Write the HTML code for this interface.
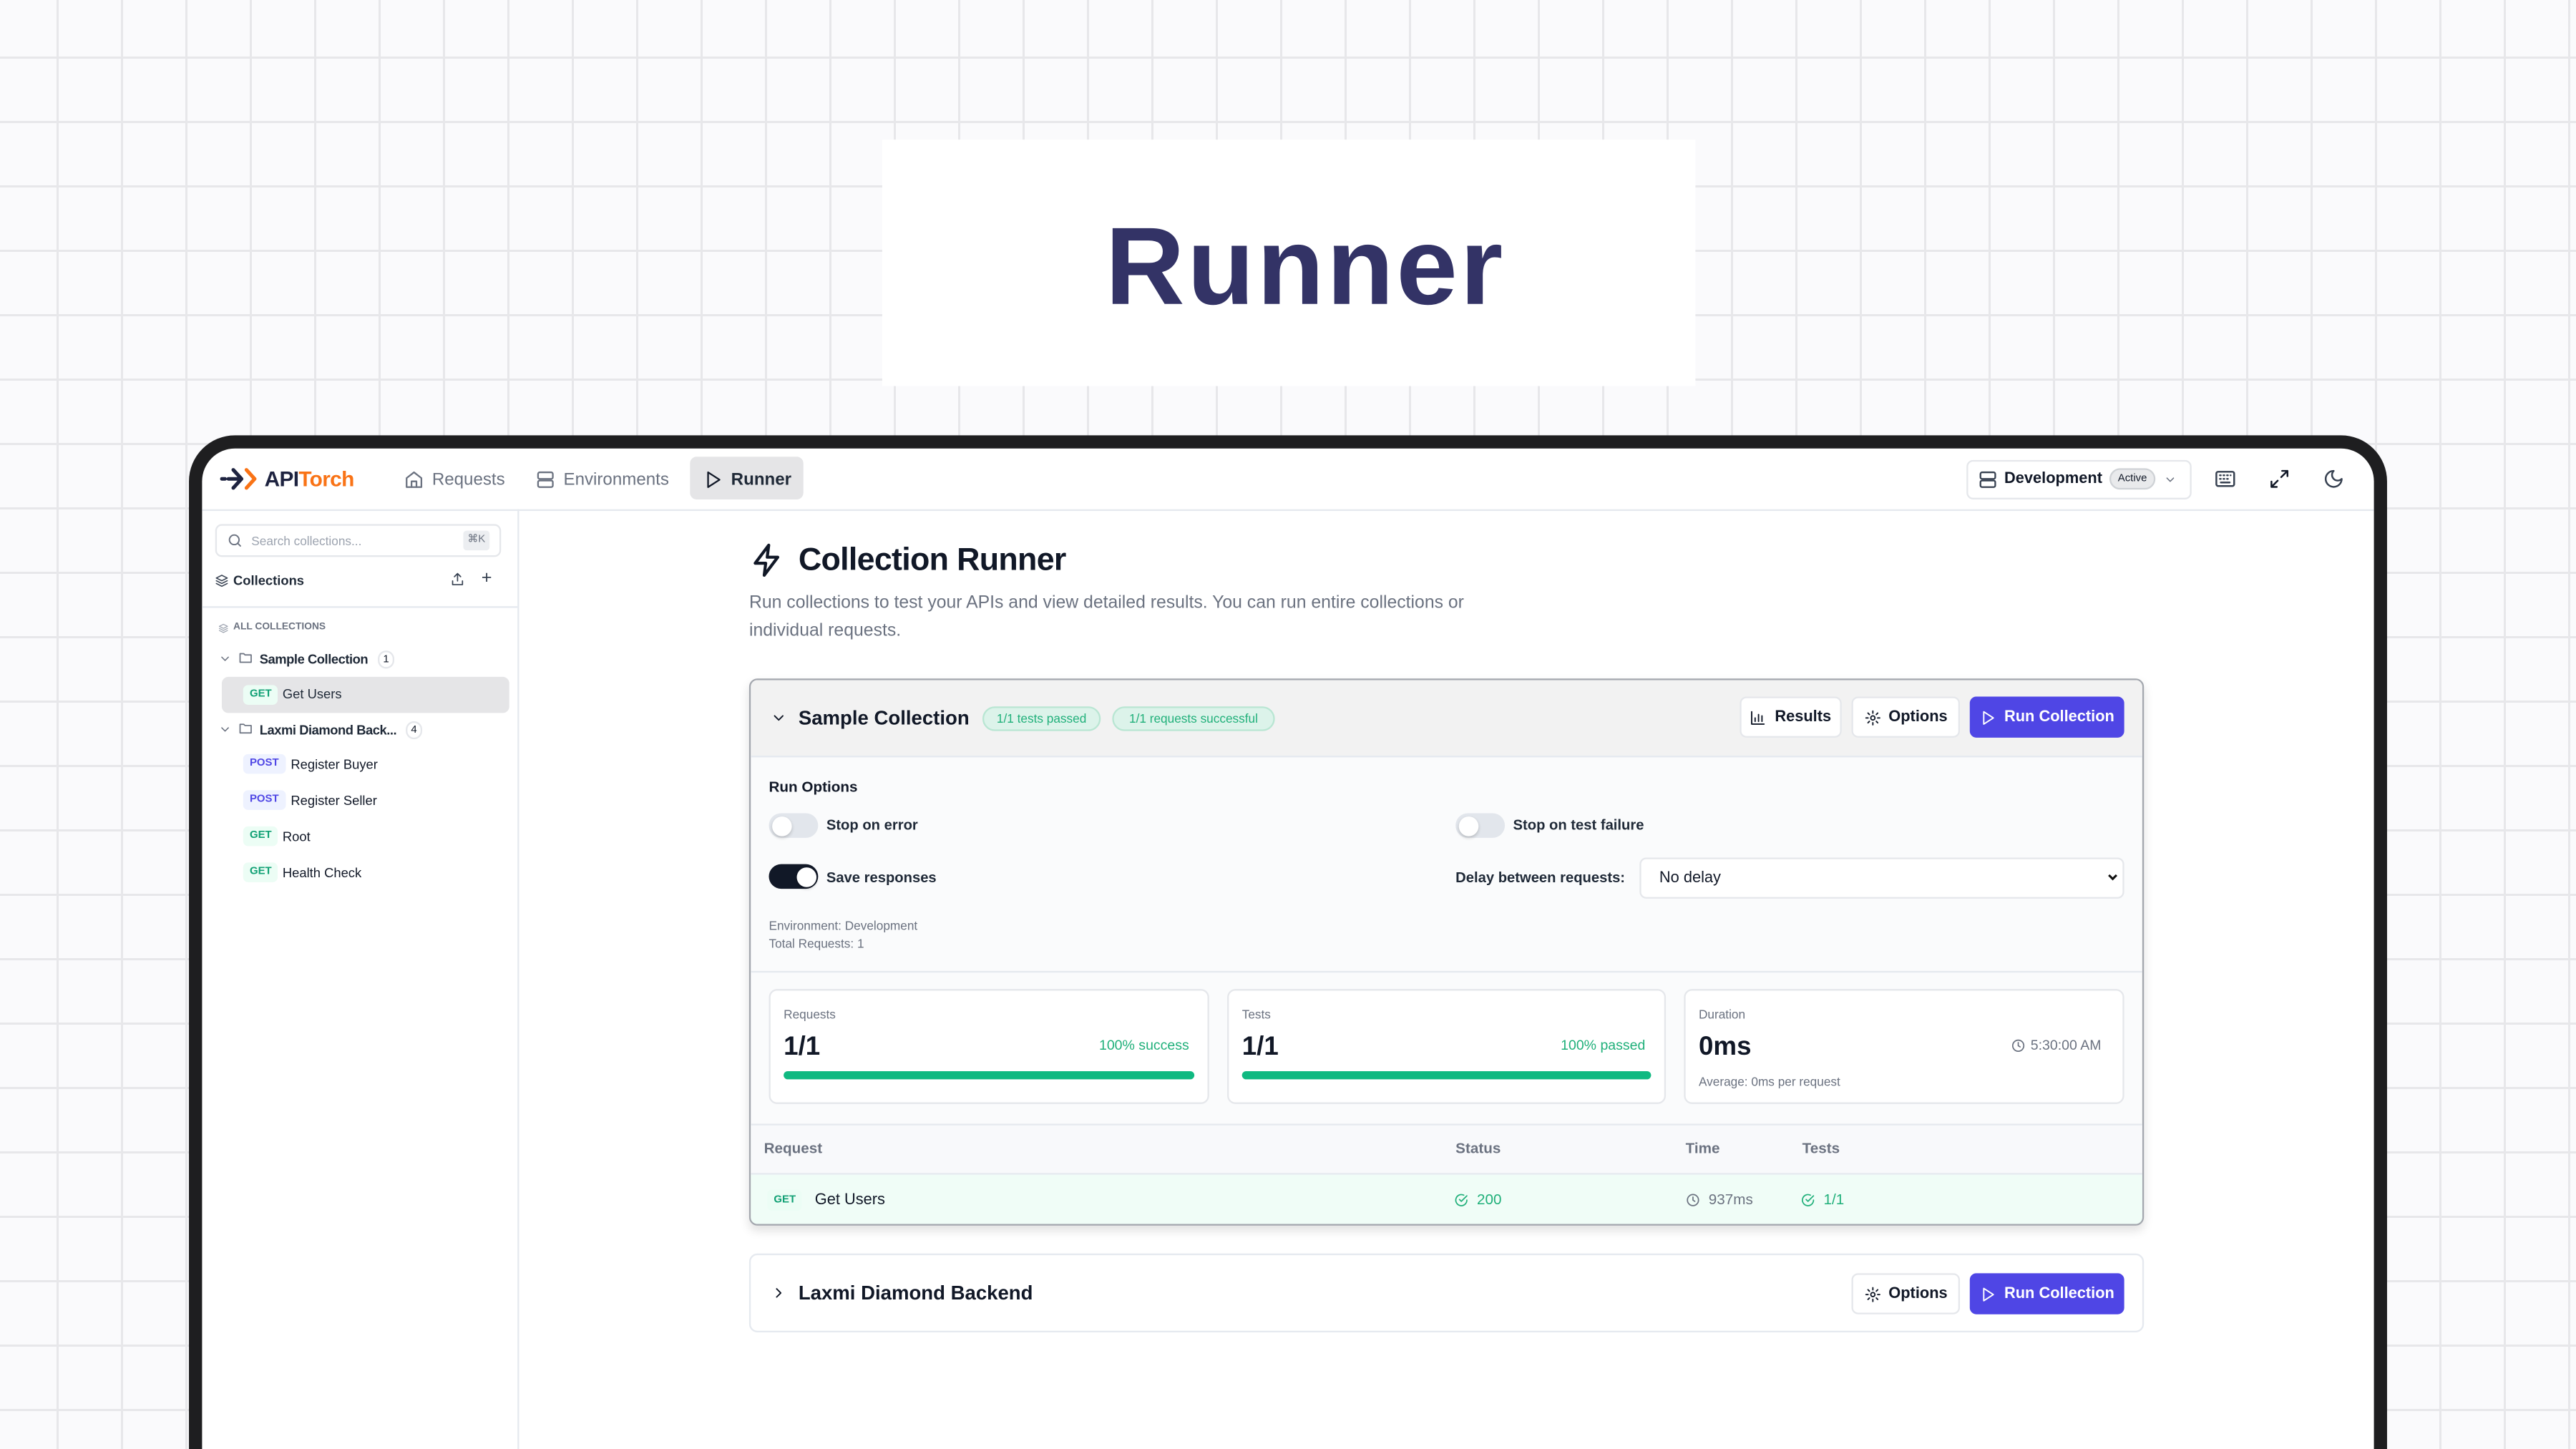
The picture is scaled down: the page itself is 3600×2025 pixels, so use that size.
<!DOCTYPE html>
<html><head><meta charset="utf-8"><style>
*{box-sizing:border-box;margin:0;padding:0}
html,body{width:3600px;height:2025px;overflow:hidden}
body{background-color:#fafafc;background-image:linear-gradient(to right,#e7e7ea 3px,transparent 3px),linear-gradient(to bottom,#e7e7ea 3px,transparent 3px);background-size:90px 90px;background-position:79px 79px;font-family:"Liberation Sans",sans-serif;color:#111827;position:relative}
#s{position:absolute;left:0;top:0;width:1568px;height:882px;overflow:hidden;transform:scale(2.29592);transform-origin:0 0}
.a{position:absolute;white-space:nowrap}
svg{display:block}
.ic{fill:none;stroke:currentColor;stroke-width:2;stroke-linecap:round;stroke-linejoin:round}
.badge{position:absolute;font-size:6.5px;font-weight:bold;border-radius:3px;padding:0 4px;height:12px;line-height:12px}
.get{background:#ecfdf5;color:#10a074}
.post{background:#eef2ff;color:#4f46e5}
.btn{position:absolute;height:25px;border:1px solid #e5e7eb;background:#fff;border-radius:4px;font-size:9.5px;font-weight:bold;display:flex;align-items:center;justify-content:center;gap:5px;color:#111827}
.run{background:#4f46e5;border-color:#4f46e5;color:#fff}
.tg{position:absolute;width:30px;height:15px;border-radius:8px;background:#e2e6ec}
.tg::after{content:"";position:absolute;left:1.5px;top:1.5px;width:12px;height:12px;border-radius:50%;background:#fff;box-shadow:0 1px 2px rgba(0,0,0,.2)}
.tg.on{background:#111827}.tg.on::after{left:16.5px}
.stat{position:absolute;top:602px;height:70px;background:#fff;border:1px solid #e5e7eb;border-radius:5px}
</style></head><body><div id="s">
<div class="a" style="left:537px;top:85px;width:495px;height:150px;background:#fff"></div>
<div class="a" style="left:547px;top:121px;width:495px;text-align:center;font-size:67px;font-weight:bold;color:#333366;letter-spacing:1.5px;line-height:84px">Runner</div>

<div class="a" style="left:115px;top:265px;width:1338px;height:617px;background:#1e1e20;border-radius:28px 28px 0 0"></div>
<div class="a" style="left:123px;top:273px;width:1322px;height:609px;background:#fff;border-radius:20px 20px 0 0;overflow:hidden">
 <div class="a" style="left:0;top:37px;width:1322px;height:1px;background:#e5e9ef"></div>
 <div class="a" style="left:192px;top:37px;width:1px;height:572px;background:#e5e9ef"></div>
</div>
<!-- logo -->
<svg class="a" style="left:134px;top:284px" width="24" height="15" viewBox="0 0 24 15"><g fill="none" stroke-width="2.2" stroke-linecap="round" stroke-linejoin="round"><path d="M1 7.5h2M5 7.5h8M8 2l5 5.5L8 13" stroke="#1e2340"/><path d="M16 2l5 5.5-5 5.5" stroke="#f97316"/></g></svg>
<div class="a" style="left:161px;top:284px;font-size:13px;font-weight:bold;letter-spacing:-.3px"><span style="color:#1e2340">API</span><span style="color:#f97316">Torch</span></div>
<!-- nav -->
<svg class="a ic" style="left:246px;top:286px;color:#6b7280" width="12" height="12" viewBox="0 0 24 24"><path d="M3 10l9-7 9 7v11H3z"/><path d="M9 21v-7h6v7"/></svg>
<div class="a" style="left:263px;top:286px;font-size:10.5px;color:#6b7280">Requests</div>
<svg class="a ic" style="left:326px;top:286px;color:#6b7280" width="12" height="12" viewBox="0 0 24 24"><rect x="3" y="3" width="18" height="8" rx="2"/><rect x="3" y="13" width="18" height="8" rx="2"/></svg>
<div class="a" style="left:343px;top:286px;font-size:10.5px;color:#6b7280">Environments</div>
<div class="a" style="left:420px;top:278px;width:69px;height:26px;background:#e5e5e7;border-radius:4px"></div>
<svg class="a ic" style="left:428px;top:286px;color:#111827" width="12" height="12" viewBox="0 0 24 24"><path d="M6 3l14 9-14 9z"/></svg>
<div class="a" style="left:445px;top:286px;font-size:10.5px;font-weight:bold;color:#1f2937">Runner</div>
<!-- right nav -->
<div class="a" style="left:1197px;top:280px;width:137px;height:24px;border:1px solid #e5e7eb;border-radius:4px"></div>
<svg class="a ic" style="left:1204px;top:286px;color:#374151" width="12" height="12" viewBox="0 0 24 24"><rect x="3" y="3" width="18" height="8" rx="2"/><rect x="3" y="13" width="18" height="8" rx="2"/></svg>
<div class="a" style="left:1220px;top:286px;font-size:9.5px;font-weight:bold">Development</div>
<div class="a" style="left:1284px;top:285px;width:28px;height:13px;border:1px solid #cfd2d6;background:#e9eaec;border-radius:7px;font-size:6.5px;text-align:center;line-height:11px">Active</div>
<svg class="a ic" style="left:1317px;top:288px;color:#6b7280" width="8" height="8" viewBox="0 0 24 24"><path d="M6 9l6 6 6-6"/></svg>
<svg class="a ic" style="left:1348px;top:285px;color:#374151" width="13" height="13" viewBox="0 0 24 24"><rect x="2" y="4" width="20" height="16" rx="2"/><path d="M6 8h1M10 8h1M14 8h1M18 8h0M6 12h1M10 12h1M14 12h1M7 16h10"/></svg>
<svg class="a ic" style="left:1381px;top:285px;color:#111827" width="13" height="13" viewBox="0 0 24 24"><path d="M15 3h6v6M21 3l-7 7M9 21H3v-6M3 21l7-7"/></svg>
<svg class="a ic" style="left:1414px;top:285px;color:#374151" width="13" height="13" viewBox="0 0 24 24"><path d="M12 3a6 6 0 0 0 9 9 9 9 0 1 1-9-9z"/></svg>

<!-- sidebar -->
<div class="a" style="left:131px;top:319px;width:174px;height:20px;border:1px solid #e5e7eb;border-radius:4px"></div>
<svg class="a ic" style="left:138px;top:324px;color:#6b7280" width="10" height="10" viewBox="0 0 24 24"><circle cx="11" cy="11" r="7"/><path d="M20 20l-4-4"/></svg>
<div class="a" style="left:153px;top:325px;font-size:7.5px;color:#9ca3af">Search collections...</div>
<div class="a" style="left:282px;top:323px;width:16px;height:12px;background:#eceef1;border-radius:2px;font-size:6.5px;color:#6b7280;text-align:center;line-height:12px">⌘K</div>
<svg class="a ic" style="left:131px;top:349px;color:#374151" width="8" height="9" viewBox="0 0 24 24"><path d="M12 2l10 5-10 5L2 7z"/><path d="M2 12l10 5 10-5M2 17l10 5 10-5"/></svg>
<div class="a" style="left:142px;top:349px;font-size:8px;font-weight:bold;color:#1f2937">Collections</div>
<svg class="a ic" style="left:274px;top:348px;color:#374151" width="9" height="9" viewBox="0 0 24 24"><path d="M12 15V3M7 8l5-5 5 5M4 15v6h16v-6"/></svg>
<div class="a" style="left:293px;top:346px;font-size:11px;color:#374151">+</div>
<div class="a" style="left:123px;top:369px;width:192px;height:1px;background:#e5e9ef"></div>
<svg class="a ic" style="left:133px;top:379px;color:#9ca3af" width="6" height="7" viewBox="0 0 24 24"><path d="M12 2l10 5-10 5L2 7z"/><path d="M2 12l10 5 10-5M2 17l10 5 10-5"/></svg>
<div class="a" style="left:142px;top:379px;font-size:6px;color:#6b7280;font-weight:bold">ALL COLLECTIONS</div>
<svg class="a ic" style="left:133px;top:397px;color:#6b7280" width="8" height="8" viewBox="0 0 24 24"><path d="M6 9l6 6 6-6"/></svg>
<svg class="a ic" style="left:145px;top:396px;color:#6b7280" width="9" height="9" viewBox="0 0 24 24"><path d="M3 5h6l2 2h10v12H3z"/></svg>
<div class="a" style="left:158px;top:397px;font-size:8px;font-weight:bold;color:#1f2937;letter-spacing:-.2px">Sample Collection</div>
<div class="a" style="left:230px;top:396px;width:10px;height:11px;border:1px solid #e5e7eb;border-radius:6px;font-size:6.5px;text-align:center;line-height:9px">1</div>
<div class="a" style="left:135px;top:412px;width:175px;height:22px;background:#e5e5e7;border-radius:4px"></div>
<div class="badge get" style="left:148px;top:417px">GET</div>
<div class="a" style="left:172px;top:418px;font-size:8px;color:#1f2937">Get Users</div>
<svg class="a ic" style="left:133px;top:440px;color:#6b7280" width="8" height="8" viewBox="0 0 24 24"><path d="M6 9l6 6 6-6"/></svg>
<svg class="a ic" style="left:145px;top:439px;color:#6b7280" width="9" height="9" viewBox="0 0 24 24"><path d="M3 5h6l2 2h10v12H3z"/></svg>
<div class="a" style="left:158px;top:440px;font-size:8px;font-weight:bold;color:#1f2937;letter-spacing:-.2px">Laxmi Diamond Back...</div>
<div class="a" style="left:247px;top:439px;width:10px;height:11px;border:1px solid #e5e7eb;border-radius:6px;font-size:6.5px;text-align:center;line-height:9px">4</div>
<div class="badge post" style="left:148px;top:459px">POST</div><div class="a" style="left:177px;top:461px;font-size:8px">Register Buyer</div>
<div class="badge post" style="left:148px;top:481px">POST</div><div class="a" style="left:177px;top:483px;font-size:8px">Register Seller</div>
<div class="badge get" style="left:148px;top:503px">GET</div><div class="a" style="left:172px;top:505px;font-size:8px">Root</div>
<div class="badge get" style="left:148px;top:525px">GET</div><div class="a" style="left:172px;top:527px;font-size:8px">Health Check</div>

<!-- main header -->
<svg class="a ic" style="left:456px;top:330px;color:#111827" width="22" height="22" viewBox="0 0 24 24"><path d="M13 2L4 14h7l-1 8 9-12h-7z"/></svg>
<div class="a" style="left:486px;top:330px;font-size:19.5px;font-weight:bold;letter-spacing:-.3px">Collection Runner</div>
<div class="a" style="left:456px;top:359px;font-size:10.8px;color:#6b7280;line-height:16.5px">Run collections to test your APIs and view detailed results. You can run entire collections or<br>individual requests.</div>

<!-- card 1 -->
<div class="a" style="left:456px;top:413px;width:849px;height:333px;border:1px solid #a3a7ae;border-radius:5px;background:#fafbfc;overflow:hidden;box-shadow:0 3px 6px rgba(0,0,0,.12)">
 <div class="a" style="left:0;top:0;width:849px;height:47px;background:#f2f2f2;border-bottom:1px solid #e5e9ef"></div>
 <div class="a" style="left:0;top:177px;width:849px;height:1px;background:#e5e9ef"></div>
 <div class="a" style="left:0;top:270px;width:849px;height:31px;background:#f8f9fb;border-top:1px solid #e5e9ef;border-bottom:1px solid #e5e9ef"></div>
 <div class="a" style="left:0;top:301px;width:849px;height:32px;background:#f0fdf7"></div>
</div>
<svg class="a ic" style="left:469px;top:432px;color:#111827" width="10" height="10" viewBox="0 0 24 24"><path d="M6 9l6 6 6-6"/></svg>
<div class="a" style="left:486px;top:430px;font-size:12px;font-weight:bold;color:#111827">Sample Collection</div>
<div class="a" style="left:598px;top:430px;width:72px;height:15px;background:#dcf3ea;border:1px solid #b9e6d3;border-radius:8px;font-size:7.5px;color:#20b07a;text-align:center;line-height:13px">1/1 tests passed</div>
<div class="a" style="left:677px;top:430px;width:99px;height:15px;background:#dcf3ea;border:1px solid #b9e6d3;border-radius:8px;font-size:7.5px;color:#20b07a;text-align:center;line-height:13px">1/1 requests successful</div>
<div class="btn" style="left:1059px;top:424px;width:62px"><svg class="ic" width="10" height="10" viewBox="0 0 24 24"><path d="M3 3v18h18M8 17v-5M13 17V7M18 17v-8"/></svg>Results</div>
<div class="btn" style="left:1127px;top:424px;width:66px"><svg class="ic" width="10" height="10" viewBox="0 0 24 24"><circle cx="12" cy="12" r="3"/><path d="M12 2v3M12 19v3M4.9 4.9l2.1 2.1M17 17l2.1 2.1M2 12h3M19 12h3M4.9 19.1L7 17M17 7l2.1-2.1"/></svg>Options</div>
<div class="btn run" style="left:1199px;top:424px;width:94px"><svg class="ic" width="10" height="10" viewBox="0 0 24 24"><path d="M6 3l14 9-14 9z"/></svg>Run Collection</div>

<div class="a" style="left:468px;top:474px;font-size:9px;font-weight:bold">Run Options</div>
<div class="tg" style="left:468px;top:495px"></div>
<div class="a" style="left:503px;top:497px;font-size:8.8px;font-weight:bold;color:#1f2937">Stop on error</div>
<div class="tg" style="left:886px;top:495px"></div>
<div class="a" style="left:921px;top:497px;font-size:8.8px;font-weight:bold;color:#1f2937">Stop on test failure</div>
<div class="tg on" style="left:468px;top:526px"></div>
<div class="a" style="left:503px;top:529px;font-size:8.8px;font-weight:bold;color:#1f2937">Save responses</div>
<div class="a" style="left:886px;top:529px;font-size:8.8px;font-weight:bold;color:#1f2937">Delay between requests:</div>
<div class="a" style="left:998px;top:522px;width:295px;height:25px;background:#fff;border:1px solid #e5e7eb;border-radius:4px"></div>
<div class="a" style="left:1010px;top:529px;font-size:9.5px">No delay</div>
<svg class="a" style="left:1282px;top:530px" width="8" height="8" viewBox="0 0 24 24"><path d="M5 8l7 7 7-7" fill="none" stroke="#111" stroke-width="4"/></svg>
<div class="a" style="left:468px;top:558px;font-size:7.5px;color:#6b7280;line-height:11px">Environment: Development<br>Total Requests: 1</div>

<div class="stat" style="left:468px;width:268px"></div>
<div class="stat" style="left:747px;width:267px"></div>
<div class="stat" style="left:1025px;width:268px"></div>
<div class="a" style="left:477px;top:613px;font-size:7.5px;color:#6b7280">Requests</div>
<div class="a" style="left:477px;top:629px;font-size:16px;font-weight:bold">1/1</div>
<div class="a" style="left:669px;top:631px;font-size:8.5px;color:#20b07a">100% success</div>
<div class="a" style="left:477px;top:652px;width:250px;height:5px;border-radius:3px;background:#10b981"></div>
<div class="a" style="left:756px;top:613px;font-size:7.5px;color:#6b7280">Tests</div>
<div class="a" style="left:756px;top:629px;font-size:16px;font-weight:bold">1/1</div>
<div class="a" style="left:950px;top:631px;font-size:8.5px;color:#20b07a">100% passed</div>
<div class="a" style="left:756px;top:652px;width:249px;height:5px;border-radius:3px;background:#10b981"></div>
<div class="a" style="left:1034px;top:613px;font-size:7.5px;color:#6b7280">Duration</div>
<div class="a" style="left:1034px;top:629px;font-size:16px;font-weight:bold">0ms</div>
<svg class="a ic" style="left:1224px;top:632px;color:#6b7280" width="9" height="9" viewBox="0 0 24 24"><circle cx="12" cy="12" r="9"/><path d="M12 7v5l3 2"/></svg>
<div class="a" style="left:1236px;top:631px;font-size:8.5px;color:#6b7280">5:30:00 AM</div>
<div class="a" style="left:1034px;top:654px;font-size:7.5px;color:#6b7280">Average: 0ms per request</div>

<div class="a" style="left:465px;top:694px;font-size:9px;color:#6b7280;font-weight:bold">Request</div>
<div class="a" style="left:886px;top:694px;font-size:9px;color:#6b7280;font-weight:bold">Status</div>
<div class="a" style="left:1026px;top:694px;font-size:9px;color:#6b7280;font-weight:bold">Time</div>
<div class="a" style="left:1097px;top:694px;font-size:9px;color:#6b7280;font-weight:bold">Tests</div>
<div class="badge get" style="left:467px;top:724px;height:13px;line-height:13px">GET</div>
<div class="a" style="left:496px;top:725px;font-size:9.5px">Get Users</div>
<svg class="a ic" style="left:885px;top:726px;color:#20b07a" width="9" height="9" viewBox="0 0 24 24"><path d="M21 12a9 9 0 1 1-5-8"/><path d="M9 11l3 3 9-9"/></svg>
<div class="a" style="left:899px;top:725px;font-size:9px;color:#20b07a">200</div>
<svg class="a ic" style="left:1026px;top:726px;color:#6b7280" width="9" height="9" viewBox="0 0 24 24"><circle cx="12" cy="12" r="9"/><path d="M12 7v5l3 2"/></svg>
<div class="a" style="left:1040px;top:725px;font-size:9px;color:#6b7280">937ms</div>
<svg class="a ic" style="left:1096px;top:726px;color:#20b07a" width="9" height="9" viewBox="0 0 24 24"><path d="M21 12a9 9 0 1 1-5-8"/><path d="M9 11l3 3 9-9"/></svg>
<div class="a" style="left:1110px;top:725px;font-size:9px;color:#20b07a">1/1</div>

<!-- card 2 -->
<div class="a" style="left:456px;top:763px;width:849px;height:48px;border:1px solid #e5e9ef;border-radius:5px;background:#fff"></div>
<svg class="a ic" style="left:469px;top:782px;color:#111827" width="10" height="10" viewBox="0 0 24 24"><path d="M9 6l6 6-6 6"/></svg>
<div class="a" style="left:486px;top:780px;font-size:12px;font-weight:bold">Laxmi Diamond Backend</div>
<div class="btn" style="left:1127px;top:775px;width:66px"><svg class="ic" width="10" height="10" viewBox="0 0 24 24"><circle cx="12" cy="12" r="3"/><path d="M12 2v3M12 19v3M4.9 4.9l2.1 2.1M17 17l2.1 2.1M2 12h3M19 12h3M4.9 19.1L7 17M17 7l2.1-2.1"/></svg>Options</div>
<div class="btn run" style="left:1199px;top:775px;width:94px"><svg class="ic" width="10" height="10" viewBox="0 0 24 24"><path d="M6 3l14 9-14 9z"/></svg>Run Collection</div>
</div></body></html>
